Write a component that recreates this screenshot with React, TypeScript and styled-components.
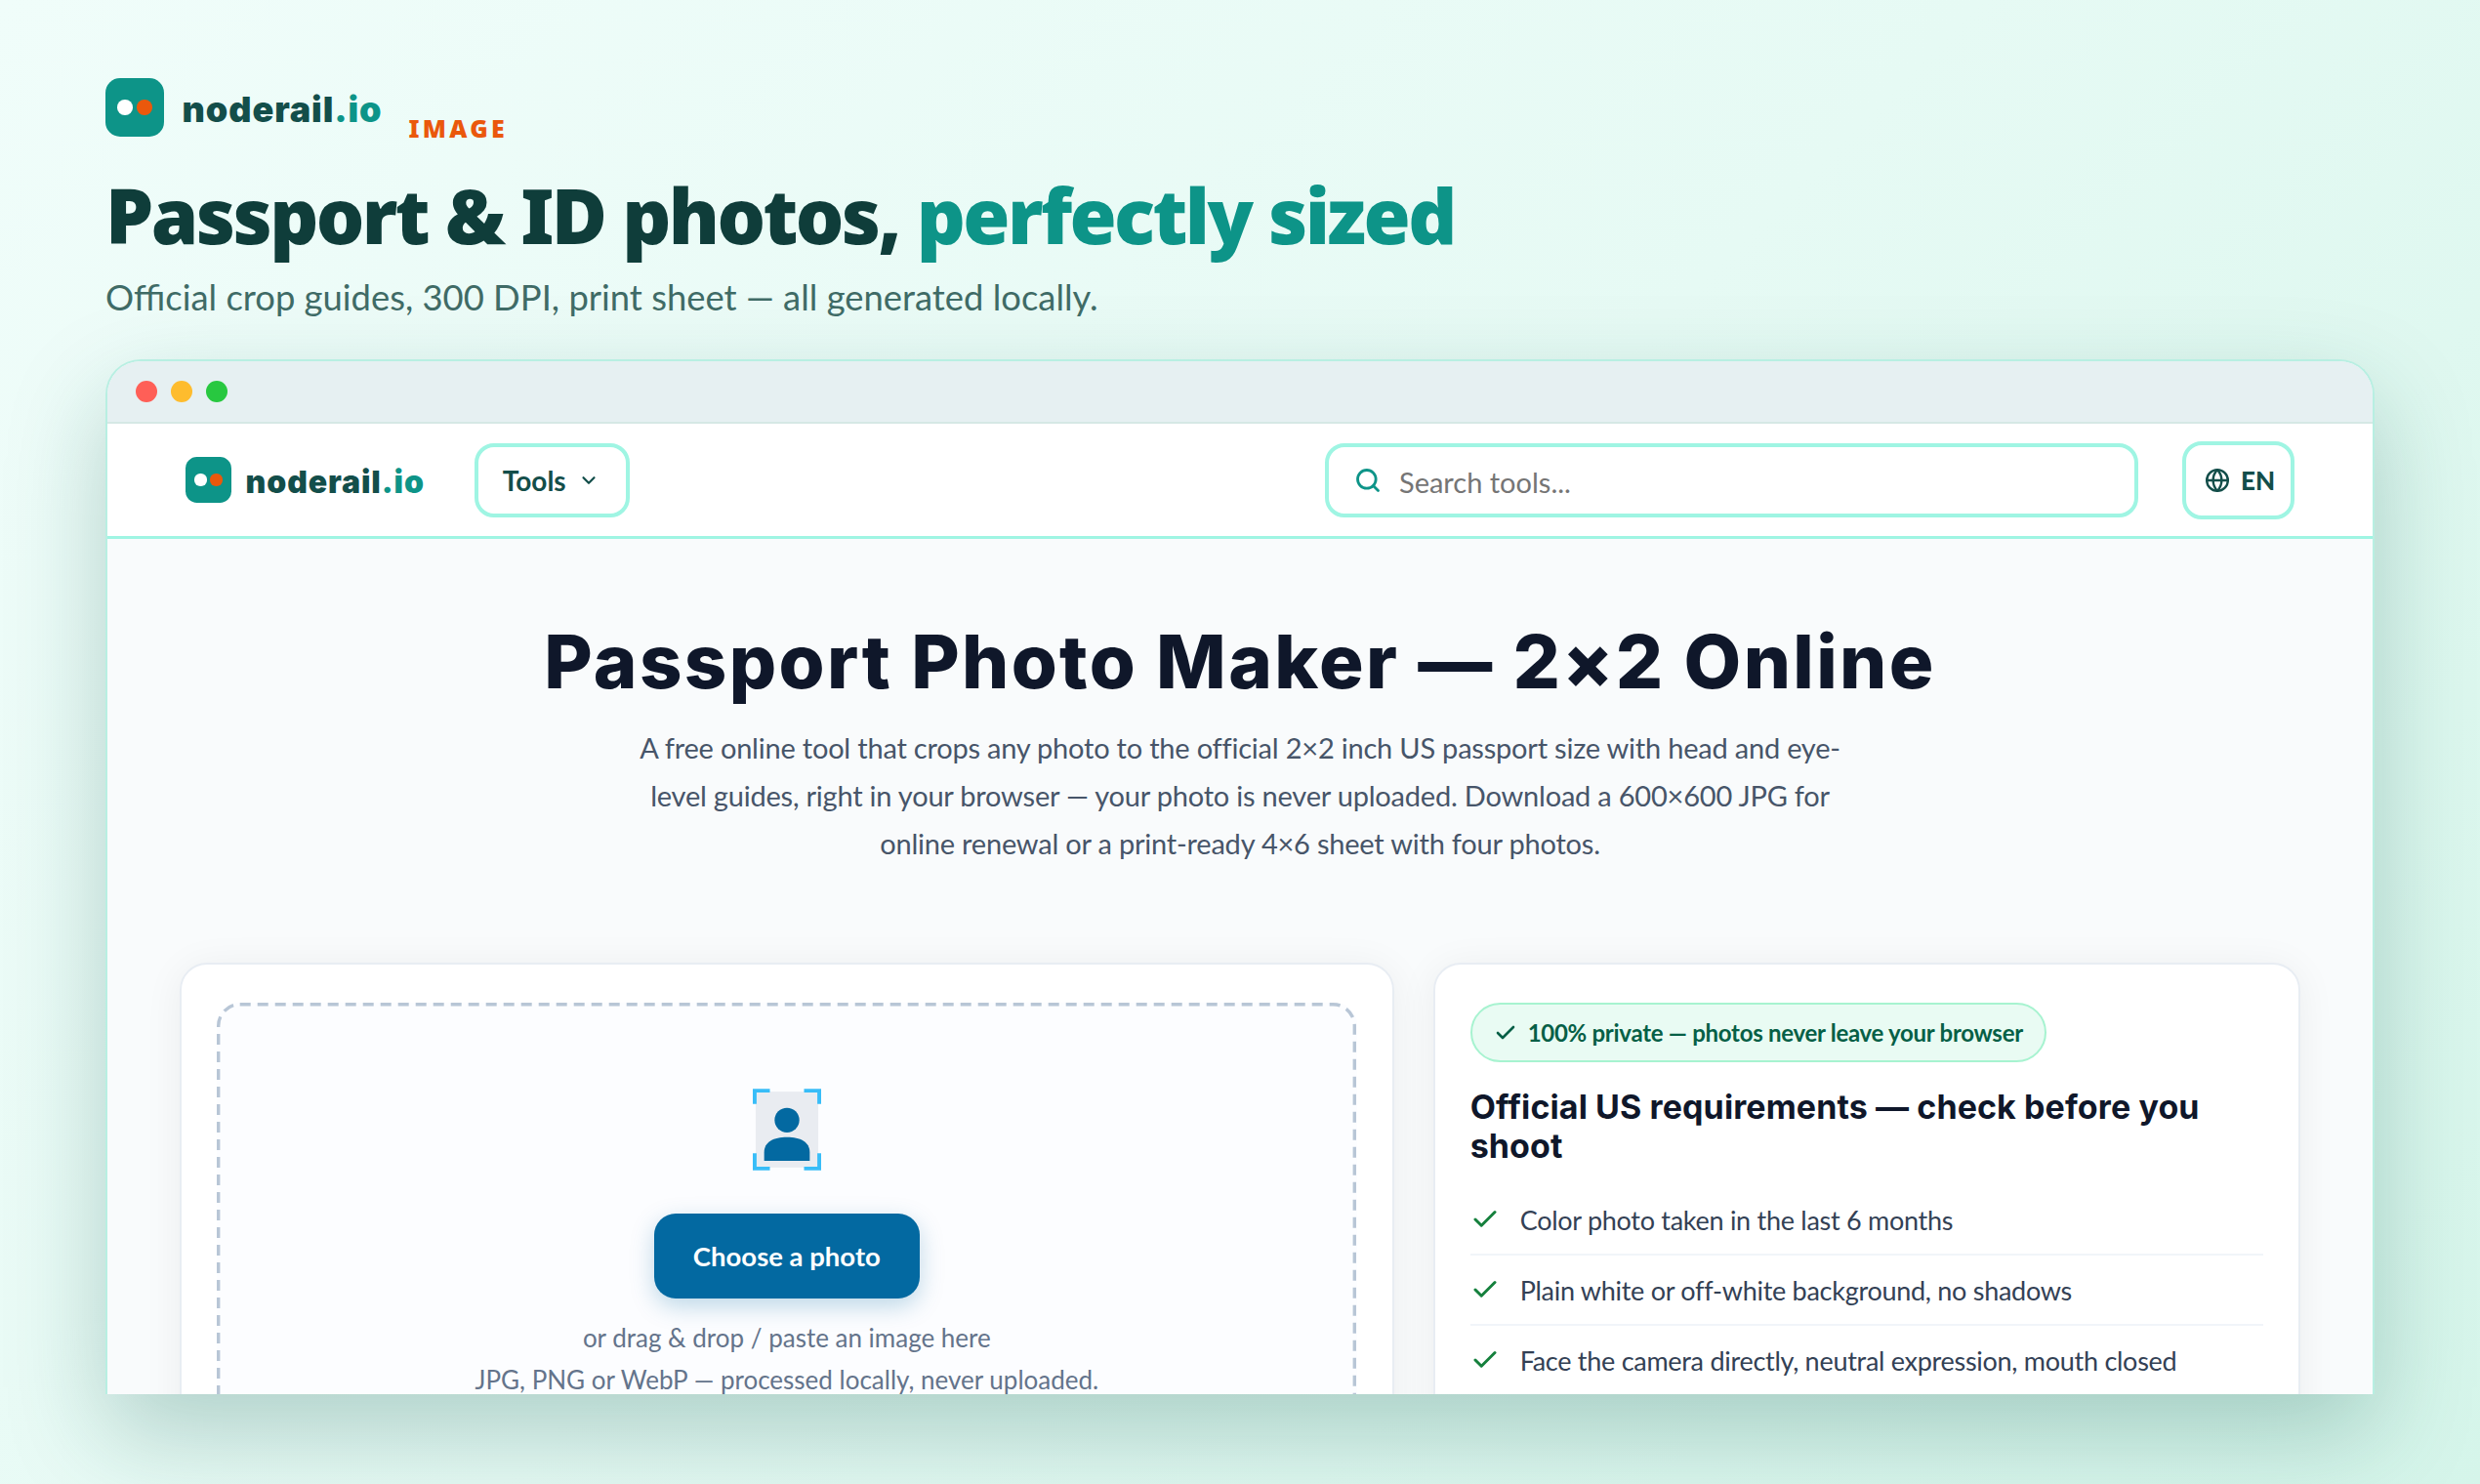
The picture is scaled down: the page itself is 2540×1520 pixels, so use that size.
import React from 'react';
import styled, {createGlobalStyle} from 'styled-components';
import {Check, ChevronDown, Globe, Search} from 'lucide-react';

const BODY_FONT = '"Lato", "Noto Sans", sans-serif';
const HEAD_FONT = '"Inter", "Noto Sans", sans-serif';
const HERO_FONT = '"Noto Sans", "Lato", sans-serif';

const REQUIREMENTS = [
    'Color photo taken in the last 6 months',
    'Plain white or off-white background, no shadows',
    'Face the camera directly, neutral expression, mouth closed',
];

const GlobalStyle = createGlobalStyle`
    html, body {
        margin: 0;
        padding: 0;
    }
    body {
        font-family: ${BODY_FONT};
        overflow: hidden;
    }
    * {
        box-sizing: border-box;
    }
`;

const Logo = ({size, fontSize}: {size: number; fontSize: number}) => (
    <LogoRow $size={size}>
        <LogoMark $size={size}>
            <LogoDot $size={size} $color="#ffffff" />
            <LogoDot $size={size} $color="#ea580c" />
        </LogoMark>
        <LogoText $fontSize={fontSize}>
            noderail<LogoTld>.io</LogoTld>
        </LogoText>
    </LogoRow>
);

const PhotoIcon = () => (
    <svg width="70" height="84" viewBox="0 0 72 86">
        <rect x="3" y="3" width="66" height="80" fill="#e9ecf1" />
        <circle cx="36" cy="33" r="13" fill="#0369a1" />
        <path d="M12 76 V67 C12 56 22 51 36 51 C50 51 60 56 60 67 V76 Z" fill="#0369a1" />
        <path
            d="M2 16 V2 H18 M54 2 H70 V16 M2 68 V84 H18 M54 84 H70 V68"
            fill="none"
            stroke="#38bdf8"
            strokeWidth="4"
        />
    </svg>
);

export default function App() {
    return (
        <Page>
            <GlobalStyle />
            <Hero>
                <BrandRow>
                    <Logo size={60} fontSize={36} />
                    <Category>IMAGE</Category>
                </BrandRow>
                <HeroTitle>
                    Passport &amp; ID photos, <HeroAccent>perfectly sized</HeroAccent>
                </HeroTitle>
                <HeroSub>Official crop guides, 300 DPI, print sheet — all generated locally.</HeroSub>
            </Hero>

            <BrowserWindow>
                <TitleBar>
                    <TrafficDot $color="#ff5f57" />
                    <TrafficDot $color="#febc2e" />
                    <TrafficDot $color="#28c840" />
                </TitleBar>

                <Nav>
                    <Logo size={47} fontSize={32} />
                    <ToolsButton>
                        Tools
                        <ChevronDown size={22} strokeWidth={2.4} />
                    </ToolsButton>
                    <SearchBox>
                        <Search size={28} strokeWidth={2.4} color="#0d9488" />
                        <SearchInput placeholder="Search tools..." readOnly />
                    </SearchBox>
                    <LangButton>
                        <Globe size={26} strokeWidth={2.2} />
                        EN
                    </LangButton>
                </Nav>

                <Main>
                    <PageTitle>Passport Photo Maker — 2×2 Online</PageTitle>
                    <Intro>
                        A free online tool that crops any photo to the official 2×2 inch US passport size with head and
                        eye-level guides, right in your browser — your photo is never uploaded. Download a 600×600 JPG
                        for online renewal or a print-ready 4×6 sheet with four photos.
                    </Intro>

                    <Columns>
                        <Card>
                            <DropZone>
                                <DashOutline>
                                    <rect
                                        x="1.7"
                                        y="1.7"
                                        width="1163.6"
                                        height="556.6"
                                        rx="22"
                                        fill="none"
                                        stroke="#b8c6d6"
                                        strokeWidth="3.4"
                                        strokeDasharray="11 7"
                                    />
                                </DashOutline>
                                <PhotoIcon />
                                <ChooseButton>Choose a photo</ChooseButton>
                                <DropHint>
                                    or drag &amp; drop / paste an image here
                                    <br />
                                    JPG, PNG or WebP — processed locally, never uploaded.
                                </DropHint>
                            </DropZone>
                        </Card>

                        <Card>
                            <PrivacyPill>
                                <Check size={24} strokeWidth={2.6} />
                                100% private — photos never leave your browser
                            </PrivacyPill>
                            <CardTitle>Official US requirements — check before you shoot</CardTitle>
                            <ReqList>
                                {REQUIREMENTS.map(item => (
                                    <ReqItem key={item}>
                                        <Check size={30} strokeWidth={2.4} color="#15803d" />
                                        {item}
                                    </ReqItem>
                                ))}
                            </ReqList>
                        </Card>
                    </Columns>
                </Main>
            </BrowserWindow>
        </Page>
    );
}

const Page = styled.div`
    width: 2540px;
    height: 1520px;
    padding: 80px 108px 0;
    overflow: hidden;
    background: linear-gradient(135deg, #f0fdfa 0%, #e6faf4 50%, #d5f5ea 100%);
`;

const Hero = styled.header`
    display: flex;
    flex-direction: column;
    height: 288px;
`;

const BrandRow = styled.div`
    display: flex;
    align-items: flex-end;
    gap: 27px;
    height: 60px;
`;

const LogoRow = styled.div<{$size: number}>`
    display: flex;
    align-items: center;
    gap: ${p => p.$size * 0.31}px;
`;

const LogoMark = styled.div<{$size: number}>`
    display: flex;
    align-items: center;
    justify-content: center;
    gap: ${p => p.$size * 0.08}px;
    width: ${p => p.$size}px;
    height: ${p => p.$size}px;
    border-radius: ${p => p.$size * 0.25}px;
    background: #0d9488;
`;

const LogoDot = styled.span<{$size: number; $color: string}>`
    width: ${p => p.$size * 0.26}px;
    height: ${p => p.$size * 0.26}px;
    border-radius: 50%;
    background: ${p => p.$color};
`;

const LogoText = styled.span<{$fontSize: number}>`
    position: relative;
    top: 2px;
    font-family: ${HEAD_FONT};
    font-size: ${p => p.$fontSize}px;
    font-weight: 900;
    letter-spacing: 0.9px;
    color: #134e4a;
`;

const LogoTld = styled.span`
    color: #0d9488;
`;

const Category = styled.span`
    position: relative;
    top: 3px;
    font-family: ${HERO_FONT};
    font-size: 25px;
    line-height: 24px;
    font-weight: 900;
    letter-spacing: 3.3px;
    color: #ea580c;
`;

const HeroTitle = styled.h1`
    margin: 30px 0 0;
    font-family: ${HERO_FONT};
    font-size: 78px;
    line-height: 100px;
    font-weight: 900;
    letter-spacing: -2.6px;
    color: #0f3d3a;
`;

const HeroAccent = styled.span`
    color: #0d9488;
`;

const HeroSub = styled.p`
    margin: 9px 0 0;
    font-size: 36.4px;
    line-height: 50px;
    font-weight: 400;
    color: #3f6b66;
`;

const BrowserWindow = styled.section`
    display: flex;
    flex-direction: column;
    width: 2324px;
    height: 1060px;
    overflow: hidden;
    background: #f9fbfc;
    border: 2px solid #b8efe2;
    border-bottom: none;
    border-radius: 36px 36px 0 0;
    box-shadow: 0 40px 100px rgba(15, 90, 78, 0.26);
`;

const TitleBar = styled.div`
    display: flex;
    align-items: center;
    gap: 14px;
    flex: none;
    height: 64px;
    padding: 0 29px;
    background: #e6f0f2;
    border-bottom: 2px solid #d5e8e5;
`;

const TrafficDot = styled.span<{$color: string}>`
    width: 22px;
    height: 22px;
    border-radius: 50%;
    background: ${p => p.$color};
`;

const Nav = styled.nav`
    display: flex;
    align-items: center;
    flex: none;
    height: 118px;
    padding: 0 80px;
    background: #ffffff;
    border-bottom: 3px solid #9ff5e3;
`;

const ToolsButton = styled.div`
    display: flex;
    align-items: center;
    gap: 12px;
    height: 76px;
    margin-left: 51px;
    padding: 0 27px 0 25px;
    font-size: 28px;
    font-weight: 700;
    color: #134e4a;
    border: 4px solid #9ff5e3;
    border-radius: 20px;
`;

const SearchBox = styled.div`
    display: flex;
    align-items: center;
    gap: 18px;
    width: 833px;
    height: 76px;
    margin-left: auto;
    padding: 0 26px;
    border: 4px solid #9ff5e3;
    border-radius: 20px;
`;

const SearchInput = styled.input`
    flex: 1;
    min-width: 0;
    padding: 3px 0 0;
    border: none;
    outline: none;
    background: transparent;
    font-family: ${BODY_FONT};
    font-size: 29px;
    color: #1f2937;
`;

const LangButton = styled.div`
    display: flex;
    align-items: center;
    gap: 11px;
    width: 115px;
    height: 80px;
    margin-left: 45px;
    padding-left: 19px;
    font-size: 26px;
    font-weight: 900;
    color: #134e4a;
    border: 4px solid #9ff5e3;
    border-radius: 20px;
`;

const Main = styled.main`
    display: flex;
    flex-direction: column;
    align-items: center;
    padding: 79px 74px 0;
`;

const PageTitle = styled.h2`
    margin: 0;
    font-family: ${HEAD_FONT};
    font-size: 76px;
    line-height: 92px;
    font-weight: 800;
    letter-spacing: 2.35px;
    color: #0f172a;
`;

const Intro = styled.p`
    width: 1240px;
    margin: 18px 0 0;
    text-align: center;
    font-size: 29px;
    letter-spacing: -0.21px;
    line-height: 49px;
    color: #475569;
`;

const Columns = styled.div`
    display: grid;
    grid-template-columns: 1.4fr 1fr;
    gap: 40px;
    align-self: stretch;
    margin-top: 98px;
`;

const Card = styled.article`
    height: 640px;
    padding: 39px 36px;
    background: #ffffff;
    border: 2px solid #e8edf3;
    border-radius: 28px;
    box-shadow: 0 4px 40px rgba(15, 23, 42, 0.06);
`;

const DropZone = styled.div`
    position: relative;
    display: flex;
    flex-direction: column;
    align-items: center;
    height: 560px;
    padding-top: 88px;
    background: #fcfdff;
    border-radius: 22px;
`;

const DashOutline = styled.svg`
    position: absolute;
    inset: 0;
    width: 100%;
    height: 100%;
`;

const ChooseButton = styled.div`
    display: flex;
    align-items: center;
    justify-content: center;
    width: 272px;
    height: 87px;
    margin-top: 44px;
    font-size: 27.5px;
    font-weight: 700;
    color: #ffffff;
    background: #0369a1;
    border-radius: 22px;
    box-shadow: 0 8px 24px rgba(3, 105, 161, 0.25);
`;

const DropHint = styled.p`
    margin: 19px 0 0;
    text-align: center;
    font-size: 26px;
    line-height: 43px;
    color: #64748b;
`;

const PrivacyPill = styled.div`
    display: inline-flex;
    align-items: center;
    gap: 11px;
    height: 61px;
    padding: 0 22px;
    font-size: 24px;
    letter-spacing: -0.28px;
    font-weight: 700;
    color: #065f46;
    background: #e9fbf3;
    border: 2px solid #a7f3d0;
    border-radius: 31px;
`;

const CardTitle = styled.h3`
    margin: 26px 0 0;
    font-family: ${HEAD_FONT};
    font-size: 34px;
    line-height: 40px;
    font-weight: 700;
    letter-spacing: 0.1px;
    color: #0f172a;
`;

const ReqList = styled.ul`
    margin: 20px 0 0;
    padding: 0;
    list-style: none;
`;

const ReqItem = styled.li`
    display: flex;
    align-items: center;
    gap: 21px;
    height: 72px;
    font-size: 27px;
    letter-spacing: -0.28px;
    color: #334155;
    border-bottom: 2px solid #f1f5f9;
`;
